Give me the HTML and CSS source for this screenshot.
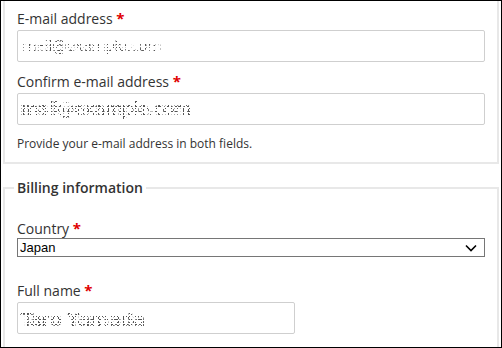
FILE: index.html
```html
<!DOCTYPE html>
<html lang="en">
<head>
<meta charset="utf-8">
<title>Checkout form</title>
<link rel="stylesheet" href="styles.css">
</head>
<body>
<div class="frame">
  <div class="group group-contact">
    <div class="field">
      <label class="label">E-mail address <span class="req">*</span></label>
      <div class="input"><span class="masked m1">mail@example.com</span></div>
    </div>
    <div class="field">
      <label class="label">Confirm e-mail address <span class="req">*</span></label>
      <div class="input"><span class="masked m2">mail@example.com</span></div>
    </div>
    <p class="help">Provide your e-mail address in both fields.</p>
  </div>
  <fieldset class="group group-billing">
    <legend class="legend">Billing information</legend>
    <div class="field field-country">
      <label class="label">Country <span class="req">*</span></label>
      <div class="select-wrap">
        <select class="select"><option>Japan</option></select>
        <svg class="chevron" width="12" height="8" viewBox="0 0 12 8" aria-hidden="true"><path d="M1 1.5 L6 6.5 L11 1.5" fill="none" stroke="#000" stroke-width="1.6"/></svg>
      </div>
    </div>
    <div class="field field-name">
      <label class="label">Full name <span class="req">*</span></label>
      <div class="input input-short"><span class="masked m3">Taro Yamada</span></div>
    </div>
  </fieldset>
</div>
</body>
</html>
```

FILE: styles.css
```css
html, body {
  margin: 0;
  padding: 0;
  background: #fff;
}
.frame {
  box-sizing: border-box;
  width: 502px;
  height: 348px;
  border: 1px solid #000;
  overflow: hidden;
  background: #fff;
  font-family: "Open Sans", "Noto Sans", sans-serif;
  color: #333;
}
.group {
  margin: 0 2px;
  border: 2px solid #e8e8e8;
  padding: 0 12px;
}
.group-contact {
  border-top: none;
  padding-top: 8px;
  padding-bottom: 9px;
}
.group-billing {
  margin-top: 14px;
  min-width: 0;
  padding-bottom: 20px;
}
.legend {
  font-size: 14px;
  line-height: 20px;
  font-weight: 600;
  padding: 0 3px;
  margin-left: -3px;
}
.field {
  margin-top: 10px;
}
.field:first-child {
  margin-top: 0;
}
.field.field-country {
  margin-top: 21px;
}
.field.field-name {
  margin-top: 24px;
}
.label {
  display: block;
  font-size: 14px;
  line-height: 20px;
  height: 20px;
  margin-bottom: 1px;
}
.field-country .label {
  margin-bottom: -1px;
}
.req {
  color: #e00000;
  font-weight: 700;
  font-size: 15px;
  line-height: 0;
}
.input {
  box-sizing: border-box;
  height: 32px;
  width: 468px;
  border: 1px solid #cfcfcf;
  border-radius: 2px;
  background: #fff;
  display: flex;
  align-items: center;
  padding-left: 4px;
}
.input-short {
  width: 278px;
}
.masked {
  display: block;
  color: #555;
  font-family: "DejaVu Sans", sans-serif;
  white-space: nowrap;
  -webkit-mask-image:
    radial-gradient(circle, #000 0.7px, transparent 1px),
    radial-gradient(circle, #000 0.6px, transparent 1px),
    radial-gradient(circle, #000 0.6px, transparent 1px);
  -webkit-mask-size: 3px 3px, 5px 4px, 4px 5px;
  -webkit-mask-position: 0 0, 1px 2px, 2px 1px;
  mask-image:
    radial-gradient(circle, #000 0.7px, transparent 1px),
    radial-gradient(circle, #000 0.6px, transparent 1px),
    radial-gradient(circle, #000 0.6px, transparent 1px);
  mask-size: 3px 3px, 5px 4px, 4px 5px;
  mask-position: 0 0, 1px 2px, 2px 1px;
}
.m1 {
  font-size: 15px;
  letter-spacing: -0.6px;
  line-height: 18px;
}
.m2 {
  margin-left: -2px;
  font-size: 18px;
  letter-spacing: -1.6px;
  line-height: 22px;
  font-weight: 700;
}
.m3 {
  margin-left: -2px;
  margin-top: 2px;
  font-size: 20px;
  letter-spacing: -1.8px;
  line-height: 26px;
  font-weight: 700;
}
.help {
  margin: 10px 0 0;
  font-size: 12px;
  line-height: 18px;
}
.select-wrap {
  position: relative;
  width: 468px;
}
.select {
  display: block;
  box-sizing: border-box;
  width: 100%;
  height: 19px;
  margin: 0;
  -webkit-appearance: none;
  appearance: none;
  font-family: "Liberation Sans", Arial, sans-serif;
  font-size: 13px;
  line-height: 17px;
  color: #000;
  background: #fff;
  border: 1px solid #767676;
  border-radius: 0;
  padding: 0 2px;
}
.chevron {
  position: absolute;
  right: 8px;
  top: 6px;
  pointer-events: none;
}
```
